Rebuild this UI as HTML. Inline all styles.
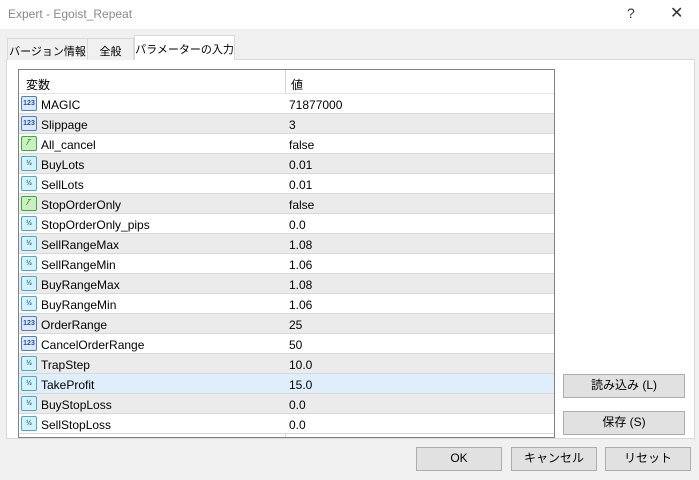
<!DOCTYPE html>
<html><head><meta charset="utf-8"><style>
*{box-sizing:border-box;margin:0;padding:0}
body{width:699px;height:480px;background:#f0f0f0;font-family:"Liberation Sans","Noto Sans CJK JP",sans-serif;font-size:12px;color:#000;position:relative;overflow:hidden}
.title{position:absolute;left:0;top:0;width:699px;height:29px;background:#fff}
.title span{position:absolute;left:8px;top:7px;color:#888;font-size:12px}
.title .q{left:627px;top:5px;font-size:14px;color:#333}
.title .x{left:670px;top:3px;font-size:16px;color:#333}
.tab{position:absolute;top:38px;height:22px;border:1px solid #d9d9d9;border-bottom:none;background:#f0f0f0;padding:3px 0 0 0;font-size:11px;white-space:nowrap;text-align:center;overflow:hidden}
.panel{position:absolute;left:6px;top:59px;width:689px;height:380px;background:#fff;border:1px solid #d9d9d9}
.list{position:absolute;left:18px;top:69px;width:537px;height:369px;border:1px solid #828282;background:#fff;overflow:hidden}
.row{position:absolute;left:0;width:535px;height:20px;border-bottom:1px solid #d8d8d8}
.row span{position:absolute;top:4px}
.n{left:22px}.v{left:270px}
.div{position:absolute;left:266px;top:0;width:1px;height:369px;background:#d8d8d8}
.ic{position:absolute;left:2px;top:2px;width:16px;height:15px;border-radius:2px;font-size:7px;font-weight:bold;text-align:center;line-height:13px}
.i1{background:#dbe9fa;border:1px solid #4f7fbf;color:#1f4f9f}
.i2{background:#c8f0c0;border:1px solid #3ea83a;color:#1b6e18}
.i3{background:#d4f2fb;border:1px solid #49a7c9;color:#1b6a8a}
.btn{position:absolute;height:24px;border:1px solid #adadad;background:#e1e1e1;text-align:center;line-height:21px;font-size:12px}
</style></head><body>
<div class="title"><span>Expert - Egoist_Repeat</span><span class="q">?</span><span class="x">✕</span></div>
<div class="panel"></div>
<div class="tab" style="left:7px;width:81px;padding-top:4px">バージョン情報</div>
<div class="tab" style="left:87px;width:47px;padding-top:4px">全般</div>
<div class="tab" style="left:134px;top:35px;height:25px;width:101px;background:#fff;padding-top:5px">パラメーターの入力</div>
<div class="list">
<div class="row" style="top:0;height:24px;border-bottom:1px solid #e5e5e5"><span style="left:7px;top:6px">変数</span><span style="left:272px;top:6px">値</span></div>
<div class="div"></div>
<div id="rows"></div>
</div>
<div class="btn" style="left:563px;top:374px;width:122px">読み込み (L)</div>
<div class="btn" style="left:563px;top:411px;width:122px">保存 (S)</div>
<div class="btn" style="left:416px;top:447px;width:86px">OK</div>
<div class="btn" style="left:511px;top:447px;width:86px">キャンセル</div>
<div class="btn" style="left:605px;top:447px;width:86px">リセット</div>
<script>
var d=[["MAGIC","71877000",1],["Slippage","3",1],["All_cancel","false",2],["BuyLots","0.01",3],["SellLots","0.01",3],["StopOrderOnly","false",2],["StopOrderOnly_pips","0.0",3],["SellRangeMax","1.08",3],["SellRangeMin","1.06",3],["BuyRangeMax","1.08",3],["BuyRangeMin","1.06",3],["OrderRange","25",1],["CancelOrderRange","50",1],["TrapStep","10.0",3],["TakeProfit","15.0",3],["BuyStopLoss","0.0",3],["SellStopLoss","0.0",3]];
var h="";d.forEach(function(r,i){var bg=i==14?"#dfeefb":(i%2?"#ebebeb":"#fff");var t=r[2]==1?"123":r[2]==2?"⁄‾":"½";
h+='<div class="row" style="top:'+(24+i*20)+'px;background:'+bg+'"><div class="ic i'+r[2]+'">'+t+'</div><span class="n">'+r[0]+'</span><span class="v">'+r[1]+'</span></div>';});
document.getElementById("rows").outerHTML=h;
</script>
</body></html>
